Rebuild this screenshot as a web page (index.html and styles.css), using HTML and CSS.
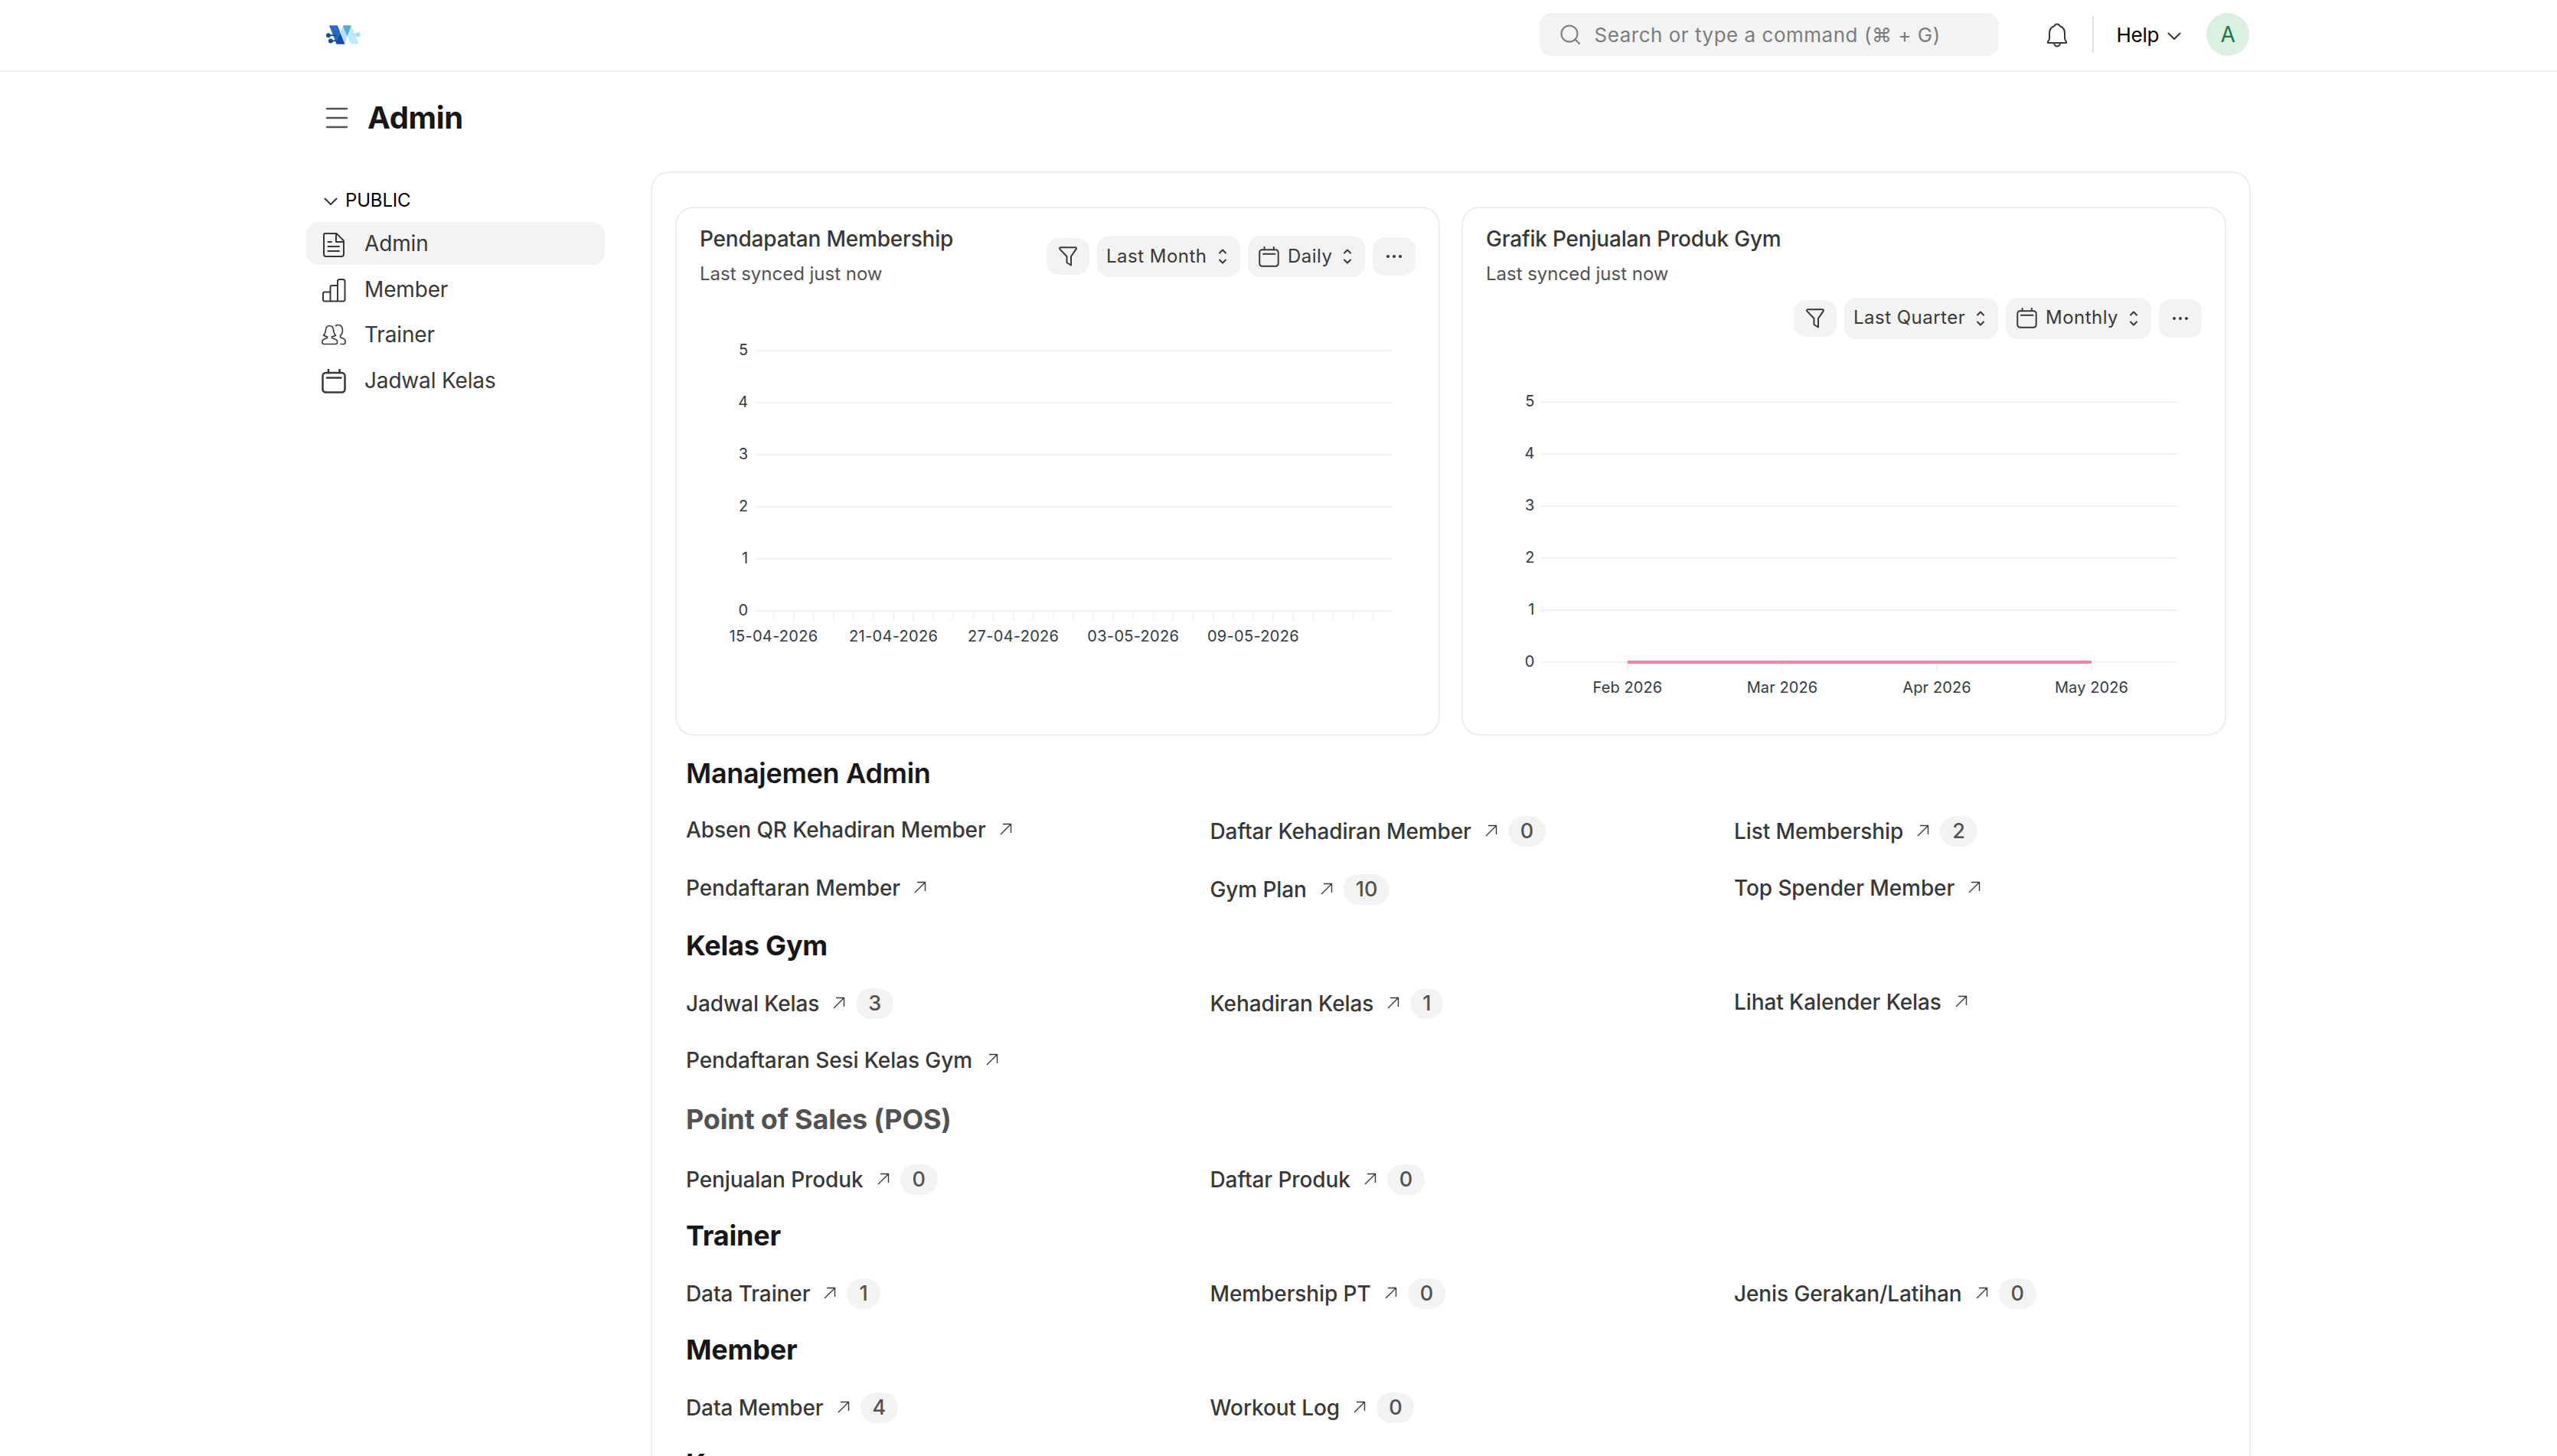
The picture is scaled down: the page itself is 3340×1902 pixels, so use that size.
FILE: index.html
```html
<!DOCTYPE html>
<html lang="id">
<head>
    <meta charset="UTF-8">
    <title>Admin</title>

    <link rel="stylesheet" href="styles.css">
</head>
<body>
<!-- shared icons -->
<svg class="sprite">
    <symbol id="icon-arrow" viewBox="0 0 16 16">
        <path d="M1 15L14 2M4 1.5H14.5V13"/>
    </symbol>
    <symbol id="icon-down" viewBox="0 0 18 12">
        <path d="M1.5 1.5L9 9L16.500 1.5"/>
    </symbol>
    <symbol id="icon-select" viewBox="0 0 12 20">
        <path d="M2 5.500L6 1.500L10 5.500M2 14.500L6 18.500L10 14.500"/>
    </symbol>
    <symbol id="icon-calendar" viewBox="0 0 32 32">
        <rect x="1.5" y="5" width="29" height="25.500" rx="4"/>
        <path d="M9 1V5M23.500 1V5M7 11.500H25.500"/>
    </symbol>
    <symbol id="icon-filter" viewBox="0 0 24 26">
        <path d="M2 1.200H22Q23.500 2 22.500 3.600L16 13V24.500L10.500 21V13L1.500 3.600Q0.500 2 2 1.200Z"/>
    </symbol>
    <symbol id="icon-dots" viewBox="0 0 22 6">
        <circle cx="3" cy="3" r="2"/>
        <circle cx="11" cy="3" r="2"/>
        <circle cx="19" cy="3" r="2"/>
    </symbol>
</svg>

<header class="navbar">
    <div class="container navbar-inner">
        <svg class="logo" viewBox="107 95 136 80">
            <polygon points="119,98 152,98 181,171 148,171" fill="#2868c8"/>
            <polygon points="163,128 181,171 148,171 146,166" fill="#134d9e"/>
            <polygon points="173,98 206,98 236,171 203,171" fill="#bdebfc"/>
            <polygon points="175,98 190,138 181,171 163,128" fill="#b8dcf9"/>
            <polygon points="173,98 206,98 190,140" fill="#56a7de"/>
            <path d="M116 137H150M125 159H150" stroke="#134d9e" stroke-width="5"/>
            <path d="M216 134H232" stroke="#a5dffa" stroke-width="5"/>
            <circle cx="116" cy="137" r="9" fill="#134d9e"/>
            <circle cx="125" cy="159" r="9" fill="#134d9e"/>
            <circle cx="233" cy="134" r="9" fill="#a5dffa"/>
        </svg>

        <div class="search">
            <svg class="icon search-icon" viewBox="0 0 26 26">
                <circle cx="12" cy="12" r="10.500"/>
                <path d="M19.500 19.500L25 25"/>
            </svg>
            <span>Search or type a command (⌘ + G)</span>
        </div>

        <svg class="icon bell" viewBox="0 0 28 32">
            <path d="M4 13.500Q4 6 10.500 4Q11.500 1.500 14 1.500Q16.500 1.500 17.500 4Q24 6 24 13.500V20Q24 22 25.500 23.500Q27 26 25.500 26H2.500Q1 26 2.500 23.500Q4 22 4 20ZM10 26.500Q11 30.500 14 30.500Q17 30.500 18 26.500"/>
        </svg>
        <div class="divider"></div>
        <span class="help">Help</span>
        <svg class="icon help-chevron"><use href="#icon-down"/></svg>
        <div class="avatar">A</div>
    </div>
</header>

<div class="container page-head">
    <svg class="icon menu" viewBox="0 0 28 28">
        <path d="M1 2H27M1 14H27M1 26H27"/>
    </svg>
    <h1>Admin</h1>
</div>

<div class="container layout">
    <aside class="sidebar">
        <div class="sidebar-label">
            <svg class="icon"><use href="#icon-down"/></svg>
            <span>PUBLIC</span>
        </div>
        <a class="sidebar-item active">
            <svg class="icon" viewBox="0 0 32 32">
                <path d="M4.500 1H19.500L29 10.500V28Q29 31 26 31H5.500Q3 31 3 28V3Q3 1 4.500 1ZM19 1V12H29M8.500 12H13M8.500 18H23M8.500 24H23"/>
            </svg>
            <span>Admin</span>
        </a>
        <a class="sidebar-item">
            <svg class="icon" viewBox="0 0 32 32">
                <path d="M4 29.500Q2 29.500 2 27V19.500Q2 17.500 4 17.500H11.500V11Q11.500 9 13.500 9H21V3.500Q21 1 23.500 1H28Q30.500 1 30.500 3.500V27Q30.500 29.500 28 29.500ZM11.500 17V29M21 9V29"/>
            </svg>
            <span>Member</span>
        </a>
        <a class="sidebar-item">
            <svg class="icon thin" viewBox="0 2 32 32">
                <path d="M3 28.500Q1 28.500 1 26.500V24.500Q1 23 3 22.200L7.500 20.300V18.700Q4.500 18.500 2.500 17Q5 15 5.500 10Q6 4.500 10.500 4.500Q15 4.500 15.500 10Q16 15 18.500 17Q16.500 18.500 13.500 18.700V20.300L18 22.200Q20.500 23 20.500 24.500V26.500Q20.500 28.500 18.500 28.500Z"/>
                <path d="M18.500 4.500Q20.500 3 23.500 3.800Q27.500 5 27.500 11Q27.500 14.500 24.500 17.500V19.500L29 21.500Q31 22.500 31 24V26.500Q31 28.500 29 28.500H25"/>
            </svg>
            <span>Trainer</span>
        </a>
        <a class="sidebar-item">
            <svg class="icon bold"><use href="#icon-calendar"/></svg>
            <span>Jadwal Kelas</span>
        </a>
    </aside>

    <main class="workspace">
        <div class="charts">
            <section class="card">
                <div class="card-head">
                    <div>
                        <div class="card-title">Pendapatan Membership</div>
                        <div class="card-subtitle">Last synced just now</div>
                    </div>
                    <div class="controls">
                        <button class="btn filter"><svg class="icon"><use href="#icon-filter"/></svg></button>
                        <button class="btn select last-month">Last Month <svg class="icon updown"><use href="#icon-select"/></svg></button>
                        <button class="btn select daily"><svg class="icon cal"><use href="#icon-calendar"/></svg>Daily <svg class="icon updown"><use href="#icon-select"/></svg></button>
                        <button class="btn more"><svg><use href="#icon-dots"/></svg></button>
                    </div>
                </div>
                <svg class="chart" id="chart-income" viewBox="0 0 935 500"></svg>
            </section>

            <section class="card">
                <div class="card-head wrap">
                    <div>
                        <div class="card-title">Grafik Penjualan Produk Gym</div>
                        <div class="card-subtitle">Last synced just now</div>
                    </div>
                    <div class="controls">
                        <button class="btn filter"><svg class="icon"><use href="#icon-filter"/></svg></button>
                        <button class="btn select last-quarter">Last Quarter <svg class="icon updown"><use href="#icon-select"/></svg></button>
                        <button class="btn select monthly"><svg class="icon cal"><use href="#icon-calendar"/></svg>Monthly <svg class="icon updown"><use href="#icon-select"/></svg></button>
                        <button class="btn more"><svg><use href="#icon-dots"/></svg></button>
                    </div>
                </div>
                <svg class="chart" id="chart-sales" viewBox="0 0 935 420"></svg>
            </section>
        </div>

        <section class="group manajemen">
            <h2>Manajemen Admin</h2>
            <div class="links">
                <a class="link">Absen QR Kehadiran Member <svg class="icon"><use href="#icon-arrow"/></svg></a>
                <a class="link">Daftar Kehadiran Member <svg class="icon"><use href="#icon-arrow"/></svg><span class="count">0</span></a>
                <a class="link">List Membership <svg class="icon"><use href="#icon-arrow"/></svg><span class="count">2</span></a>
                <a class="link">Pendaftaran Member <svg class="icon"><use href="#icon-arrow"/></svg></a>
                <a class="link">Gym Plan <svg class="icon"><use href="#icon-arrow"/></svg><span class="count">10</span></a>
                <a class="link">Top Spender Member <svg class="icon"><use href="#icon-arrow"/></svg></a>
            </div>
        </section>

        <section class="group kelas">
            <h2>Kelas Gym</h2>
            <div class="links">
                <a class="link">Jadwal Kelas <svg class="icon"><use href="#icon-arrow"/></svg><span class="count">3</span></a>
                <a class="link">Kehadiran Kelas <svg class="icon"><use href="#icon-arrow"/></svg><span class="count">1</span></a>
                <a class="link">Lihat Kalender Kelas <svg class="icon"><use href="#icon-arrow"/></svg></a>
                <a class="link">Pendaftaran Sesi Kelas Gym <svg class="icon"><use href="#icon-arrow"/></svg></a>
            </div>
        </section>

        <section class="group pos">
            <h2>Point of Sales (POS)</h2>
            <div class="links">
                <a class="link">Penjualan Produk <svg class="icon"><use href="#icon-arrow"/></svg><span class="count">0</span></a>
                <a class="link">Daftar Produk <svg class="icon"><use href="#icon-arrow"/></svg><span class="count">0</span></a>
            </div>
        </section>

        <section class="group">
            <h2>Trainer</h2>
            <div class="links">
                <a class="link">Data Trainer <svg class="icon"><use href="#icon-arrow"/></svg><span class="count">1</span></a>
                <a class="link">Membership PT <svg class="icon"><use href="#icon-arrow"/></svg><span class="count">0</span></a>
                <a class="link">Jenis Gerakan/Latihan <svg class="icon"><use href="#icon-arrow"/></svg><span class="count">0</span></a>
            </div>
        </section>

        <section class="group">
            <h2>Member</h2>
            <div class="links">
                <a class="link">Data Member <svg class="icon"><use href="#icon-arrow"/></svg><span class="count">4</span></a>
                <a class="link">Workout Log <svg class="icon"><use href="#icon-arrow"/></svg><span class="count">0</span></a>
            </div>
        </section>

        <section class="group">
            <h2>K</h2>
        </section>
    </main>
</div>

<script src="charts.js"></script>
</body>
</html>
```

FILE: styles.css
```css
* {
    box-sizing: border-box;
}

body {
    margin: 0;
    height: 1902px;
    overflow: hidden;
    background: #fff;
    color: #383838;
    font-family: Inter, "Liberation Sans", sans-serif;
    font-size: 28px;
    font-weight: 420;
    letter-spacing: -0.16px;
}

h1, h2 {
    margin: 0;
    color: #171717;
    font-weight: 700;
}

.sprite {
    display: none;
}

.icon {
    fill: none;
    stroke: #383838;
    stroke-width: 2;
    stroke-linecap: round;
    stroke-linejoin: round;
    flex: none;
}

.container {
    width: 2540px;
    margin: 0 auto;
}

/* navbar */
.navbar {
    height: 94px;
    border-bottom: 2px solid #ededed;
}

.navbar-inner {
    display: flex;
    align-items: center;
    height: 90px;
    padding: 0 2px 0 26px;
}

.logo {
    width: 45px;
    height: 27px;
}

.search {
    display: flex;
    align-items: center;
    width: 600px;
    height: 56px;
    margin-left: auto;
    padding-left: 27px;
    border-radius: 16px;
    background: #f3f3f3;
    color: #7c7c7c;
    font-size: 26px;
    font-weight: 400;
    letter-spacing: 0.02em;
}

.search-icon {
    width: 26px;
    height: 26px;
    margin-right: 19px;
    stroke: #7c7c7c;
}

.bell {
    width: 28px;
    height: 32px;
    margin: 2px 32px 0 62px;
}

.divider {
    width: 2px;
    height: 48px;
    margin-right: 30px;
    background: #e2e2e2;
}

.help {
    color: #000;
    font-size: 26px;
    letter-spacing: -0.3px;
}

.help-chevron {
    width: 18px;
    height: 12px;
    margin: 5px 33px 0 11px;
}

.avatar {
    width: 56px;
    height: 56px;
    border-radius: 50%;
    background: #daf0e1;
    color: #16794c;
    line-height: 56px;
    text-align: center;
}

/* page title */
.page-head {
    display: flex;
    align-items: center;
    height: 130px;
    padding: 0 0 10px 26px;
}

.page-head h1 {
    margin-top: -2px;
    font-size: 40px;
    letter-spacing: -0.3px;
}

.menu {
    width: 28px;
    height: 28px;
    margin-right: 26px;
    stroke: #525252;
    stroke-width: 2.5;
}

.layout {
    display: flex;
    align-items: flex-start;
    justify-content: space-between;
}

/* sidebar */
.sidebar {
    width: 390px;
    padding-top: 19px;
}

.sidebar-label {
    display: flex;
    align-items: center;
    height: 36px;
    margin-bottom: 11px;
    padding-left: 23px;
    color: #000;
    font-size: 24px;
}

.sidebar-label .icon {
    width: 18px;
    height: 12px;
    margin: 5px 10px 0 0;
}

.sidebar-item {
    display: flex;
    align-items: center;
    height: 56px;
    margin-bottom: 3.6px;
    padding-left: 20px;
    border-radius: 16px;
}

.sidebar-item.active {
    background: #f3f3f3;
}

.sidebar-item .icon {
    width: 32px;
    height: 32px;
    margin: 4px 24px 0 0;
}

.sidebar-item .thin {
    stroke-width: 1.6;
}

.sidebar-item .bold {
    margin-top: 2px;
    stroke-width: 2.5;
}

/* workspace */
.workspace {
    width: 2090px;
    height: 1700px;
    padding: 44px 30px 0;
    border: 2px solid #ededed;
    border-radius: 24px;
}

.charts {
    display: grid;
    grid-template-columns: 1fr 1fr;
    gap: 28px;
    margin-bottom: 25px;
}

.card {
    height: 691px;
    padding: 20px 30px 0;
    border: 2px solid #ededed;
    border-radius: 24px;
    overflow: hidden;
}

.card-head {
    display: flex;
    justify-content: space-between;
    height: 83px;
}

.card-title {
    height: 40px;
    margin-bottom: 8px;
    font-weight: 500;
    line-height: 40px;
    letter-spacing: -0.2px;
}

.card-subtitle {
    height: 35px;
    color: #525252;
    font-size: 24px;
    line-height: 36px;
    letter-spacing: -0.02px;
}

.controls {
    display: flex;
    align-items: center;
    gap: 10px;
    height: 54px;
    margin-top: 16px;
}

.wrap {
    display: block;
    height: 150px;
}

.wrap .controls {
    justify-content: flex-end;
    height: 55px;
    margin-top: 13px;
}

.btn {
    display: flex;
    align-items: center;
    justify-content: center;
    height: 54px;
    padding: 0;
    border: 0;
    border-radius: 16px;
    background: #f3f3f3;
    color: #383838;
    font: inherit;
    font-size: 24px;
    letter-spacing: 0.02em;
}

.filter {
    width: 56px;
    height: 48px;
}

.filter svg {
    width: 24px;
    height: 26px;
}

.more {
    width: 56px;
    height: 50px;
}

.more svg {
    width: 22px;
    height: 6px;
    fill: #383838;
}

.select {
    justify-content: flex-start;
    padding: 0 17px 2px 12px;
}

.updown {
    width: 12px;
    height: 20px;
    margin: 2px 0 0 auto;
}

.cal {
    width: 27px;
    height: 27px;
    margin: 2px 11px 0 2px;
    stroke-width: 2.3;
}

.last-month {
    width: 187px;
}

.daily {
    width: 153px;
}

.last-quarter {
    width: 201px;
}

.monthly {
    width: 190px;
}

.chart {
    display: block;
    width: 935px;
    margin-top: 55px;
}

.chart text {
    fill: #313b44;
    font-size: 20px;
    font-weight: 400;
    letter-spacing: 0.3px;
}

#chart-sales text {
    letter-spacing: 0.1px;
}

.chart .grid {
    stroke: #f3f3f3;
    stroke-width: 2;
}

.chart .tick {
    stroke: #f3f3f3;
    stroke-width: 2;
}

.chart .series {
    stroke: #f683ae;
    stroke-width: 4;
}

/* link groups */
.group {
    margin-bottom: 29px;
    padding-left: 14px;
}

.group h2 {
    height: 48px;
    margin-bottom: 32px;
    font-size: 36px;
    line-height: 48px;
    letter-spacing: -0.2px;
}

.manajemen h2 {
    font-weight: 600;
    letter-spacing: -0.3px;
}

.links {
    display: grid;
    grid-template-columns: repeat(3, 684.5px);
    grid-auto-rows: 40px;
    row-gap: 36px;
    align-items: start;
}

.link {
    display: flex;
    align-items: center;
    height: 36px;
    font-weight: 460;
    letter-spacing: -0.1px;
}

.link:has(.count) {
    height: 40px;
}

.link .icon {
    width: 16px;
    height: 16px;
    margin: -2px 0 0 18px;
    stroke-width: 1.4;
    stroke-linecap: butt;
    stroke-linejoin: miter;
}

.count {
    height: 40px;
    margin-left: 14px;
    padding: 0 16px;
    border-radius: 20px;
    background: #f3f3f3;
    color: #525252;
    font-size: 27px;
    line-height: 40px;
}

.kelas {
    margin-bottom: 31px;
}

.pos h2 {
    margin-bottom: 35px;
    color: #525252;
}
```

FILE: charts.js
```js
// Add one svg element to a parent
function add(parent, name, attrs, text) {
    const el = document.createElementNS('http://www.w3.org/2000/svg', name);
    for (const key in attrs) {
        el.setAttribute(key, attrs[key]);
    }
    if (text !== undefined) {
        el.textContent = text;
    }
    parent.appendChild(el);
}

// Draw the horizontal lines with the values 5 to 0
function drawGrid(svg) {
    for (let i = 0; i <= 5; i++) {
        const y = 28 + i * 68;
        add(svg, 'line', {x1: 72, x2: 904, y1: y, y2: y, class: 'grid'});
        add(svg, 'text', {x: 63.5, y: y + 6, 'text-anchor': 'end'}, 5 - i);
    }
}

// Draw the ticks of the x axis, with a label on every nth tick
function drawTicks(svg, start, step, count, labels, every) {
    for (let i = 0; i < count; i++) {
        const x = start + i * step;
        add(svg, 'line', {x1: x, x2: x, y1: 369, y2: 380, class: 'tick'});
        if (i % every === 0 && labels[i / every]) {
            add(svg, 'text', {x: x, y: 408, 'text-anchor': 'middle'}, labels[i / every]);
        }
    }
}

const income = document.querySelector('#chart-income');
drawGrid(income);
drawTicks(income, 96.5, 26.1, 31, ['15-04-2026', '21-04-2026', '27-04-2026', '03-05-2026', '09-05-2026'], 6);

const sales = document.querySelector('#chart-sales');
drawGrid(sales);
drawTicks(sales, 185, 202, 4, ['Feb 2026', 'Mar 2026', 'Apr 2026', 'May 2026'], 1);
add(sales, 'line', {x1: 185, x2: 791, y1: 368, y2: 368, class: 'series'});
```
